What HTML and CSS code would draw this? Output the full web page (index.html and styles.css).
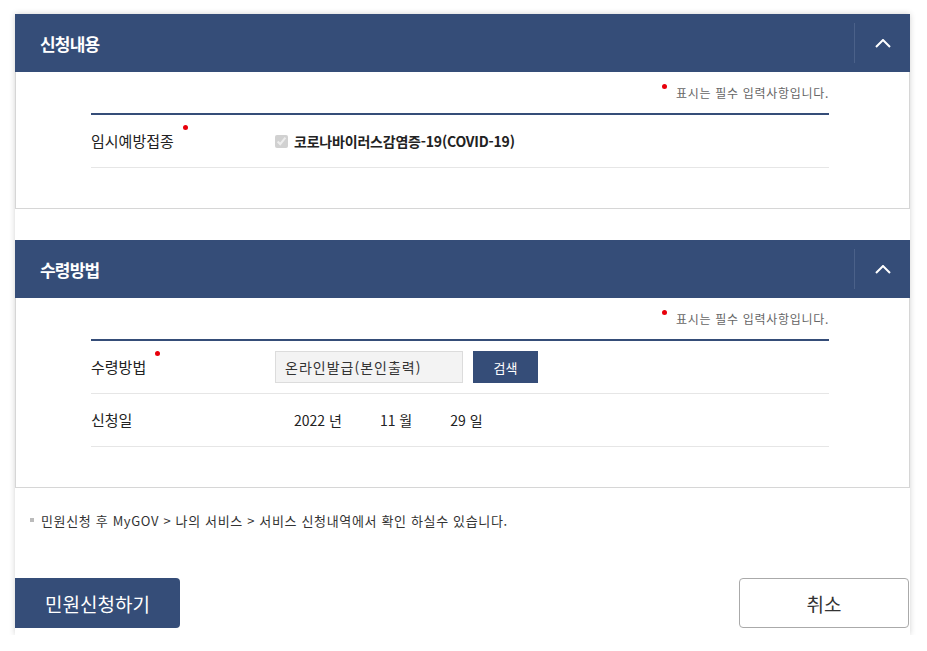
FILE: index.html
```html
<!DOCTYPE html>
<html lang="ko">
<head>
  <meta charset="UTF-8" />
  <meta name="viewport" content="width=device-width, initial-scale=1.0">
  <title>민원신청</title>
  <link rel="stylesheet" href="styles.css">
</head>
<body>
  <div class="card">

    <div class="section">
      <div class="section-head">
        <h3>신청내용</h3>
        <button class="toggle" type="button">
          <svg width="16" height="9" viewBox="0 0 16 9"><polyline points="1,8 8,1 15,8" fill="none" stroke="#fff" stroke-width="2"/></svg>
        </button>
      </div>
      <div class="section-body">
        <p class="note">표시는 필수 입력사항입니다.</p>
        <div class="form-table">
          <div class="form-row">
            <div class="label"><span class="req">임시예방접종</span></div>
            <div class="value">
              <label class="check"><input type="checkbox" checked disabled /> 코로나바이러스감염증-19(COVID-19)</label>
            </div>
          </div>
        </div>
      </div>
    </div>

    <div class="section">
      <div class="section-head">
        <h3>수령방법</h3>
        <button class="toggle" type="button">
          <svg width="16" height="9" viewBox="0 0 16 9"><polyline points="1,8 8,1 15,8" fill="none" stroke="#fff" stroke-width="2"/></svg>
        </button>
      </div>
      <div class="section-body">
        <p class="note">표시는 필수 입력사항입니다.</p>
        <div class="form-table">
          <div class="form-row">
            <div class="label"><span class="req">수령방법</span></div>
            <div class="value">
              <input type="text" class="field" value="온라인발급(본인출력)" readonly />
              <button class="btn-search" type="button">검색</button>
            </div>
          </div>
          <div class="form-row">
            <div class="label">신청일</div>
            <div class="value date">
              <span>2022 년</span>
              <span>11 월</span>
              <span>29 일</span>
            </div>
          </div>
        </div>
      </div>
    </div>

    <p class="info">민원신청 후 MyGOV &gt; 나의 서비스 &gt; 서비스 신청내역에서 확인 하실수 있습니다.</p>

    <div class="actions">
      <button class="btn-submit" type="button">민원신청하기</button>
      <button class="btn-cancel" type="button">취소</button>
    </div>

  </div>
</body>
</html>
```

FILE: styles.css
```css
body {
  margin: 0;
  background-color: #fff;
  font-family: "Noto Sans CJK KR", "Noto Sans", sans-serif;
  color: #222;
}
.card {
  width: 895px;
  margin: 14px 0 0 15px;
  padding-bottom: 7px;
  background-color: #fff;
  box-shadow: 0 0 6px rgba(0, 0, 0, 0.18);
}
.section + .section {
  margin-top: 31px;
}
.section-head {
  display: flex;
  align-items: center;
  height: 58px;
  padding-left: 25px;
  background-color: #354d78;
  color: #fff;
}
.section-head h3 {
  flex: 1;
  margin: 0;
  font-size: 17px;
  font-weight: bold;
  letter-spacing: -0.8px;
}
.toggle {
  display: flex;
  align-items: center;
  justify-content: center;
  width: 56px;
  height: 40px;
  padding: 0;
  background: none;
  border: none;
  border-left: 1px solid #4b6189;
  cursor: pointer;
}
.section-body {
  padding: 11px 80px 40px 75px;
  border: 1px solid #d6d6d6;
  border-top: none;
}
.note {
  margin: 0 0 10px;
  text-align: right;
  font-size: 12px;
  line-height: 20px;
  letter-spacing: 0.7px;
  color: #666;
}
.note::before {
  content: '';
  display: inline-block;
  width: 5px;
  height: 5px;
  margin-right: 9px;
  border-radius: 50%;
  background-color: #e8000b;
  vertical-align: top;
  position: relative;
  top: 1px;
}
.form-table {
  border-top: 2px solid #354d78;
}
.form-row {
  display: flex;
  align-items: center;
  height: 52px;
  border-bottom: 1px solid #e6e6e6;
}
.label {
  width: 184px;
  font-size: 15px;
  line-height: 20px;
  color: #222;
}
.req::after {
  content: '';
  display: inline-block;
  width: 5px;
  height: 5px;
  margin-left: 9px;
  border-radius: 50%;
  background-color: #e8000b;
  vertical-align: top;
  position: relative;
  top: -6px;
}
.value {
  display: flex;
  align-items: center;
}
.check {
  display: flex;
  align-items: center;
  font-size: 14px;
  font-weight: bold;
  letter-spacing: -0.2px;
  color: #222;
}
.check input {
  width: 13px;
  height: 13px;
  margin: 0 6px 0 0;
}
.field {
  width: 188px;
  height: 32px;
  box-sizing: border-box;
  padding: 0 9px;
  background-color: #f3f3f3;
  border: 1px solid #dcdcdc;
  font-family: inherit;
  font-size: 14px;
  letter-spacing: 1px;
  color: #333;
}
.btn-search {
  width: 65px;
  height: 32px;
  margin-left: 10px;
  background-color: #354d78;
  color: #fff;
  border: none;
  font-family: inherit;
  font-size: 13px;
  cursor: pointer;
}
.date {
  gap: 38px;
  padding-left: 19px;
  font-size: 14px;
  color: #222;
}
.info {
  margin: 23px 0 0 15px;
  font-size: 13px;
  line-height: 20px;
  letter-spacing: 0.65px;
  color: #333;
}
.info::before {
  content: '';
  display: inline-block;
  width: 4px;
  height: 4px;
  margin-right: 7px;
  background-color: #bbb;
  vertical-align: middle;
  position: relative;
  top: -2px;
}
.actions {
  display: flex;
  justify-content: space-between;
  margin-top: 47px;
  padding-right: 1px;
}
.actions button {
  height: 50px;
  font-family: inherit;
  font-size: 19px;
  cursor: pointer;
}
.btn-submit {
  width: 165px;
  background-color: #354d78;
  color: #fff;
  border: none;
  border-radius: 0 4px 4px 0;
}
.btn-cancel {
  width: 170px;
  background-color: #fff;
  color: #333;
  border: 1px solid #aaa;
  border-radius: 4px;
}
```
